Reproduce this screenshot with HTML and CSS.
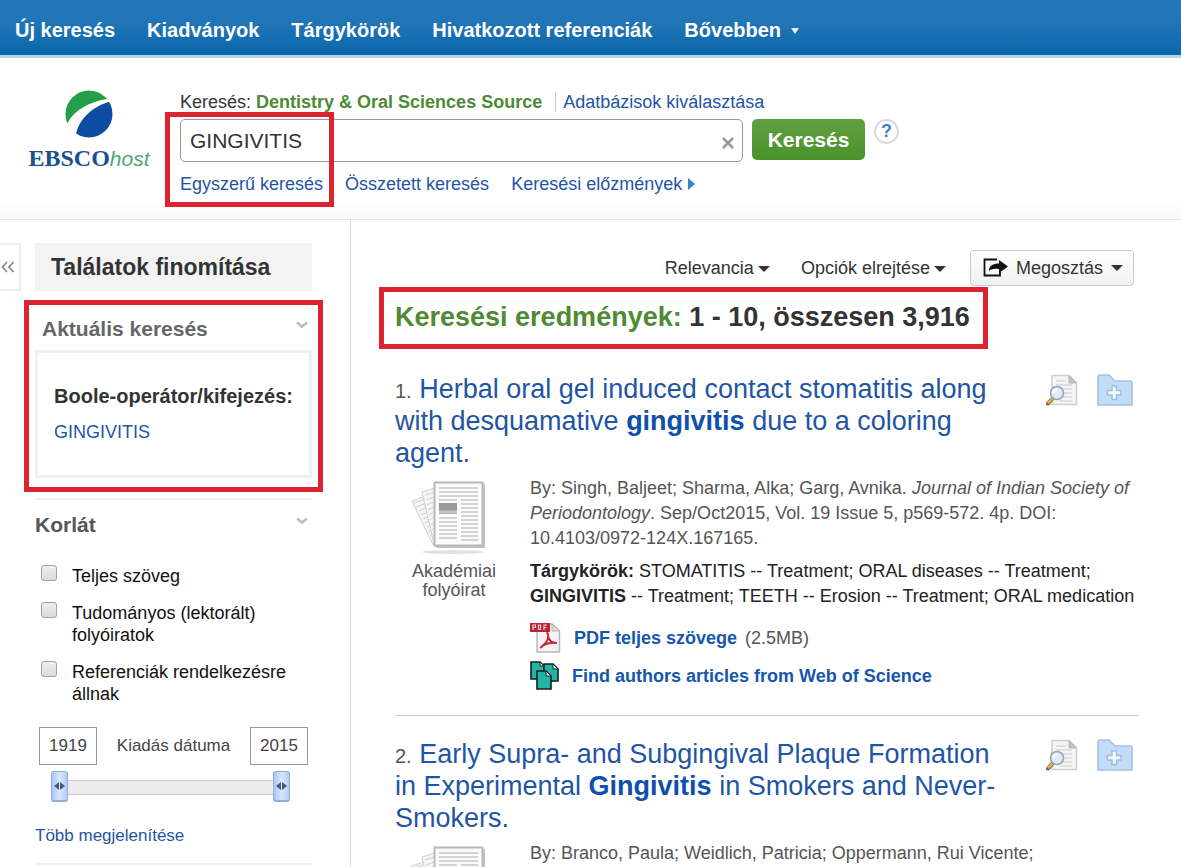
FILE: index.html
```html
<!DOCTYPE html>
<html lang="hu">
<head>
  <meta charset="UTF-8" />
  <meta name="viewport" content="width=device-width, initial-scale=1" />
  <title>EBSCOhost: GINGIVITIS</title>
  <link rel="stylesheet" href="styles.css">
</head>
<body>
  <!-- shared icons -->
  <svg class="sprite" aria-hidden="true">
    <symbol id="chevron" viewBox="0 0 12 8">
      <path d="M1 1.500 6 5.500 11 1.500" fill="none" stroke="#bdbdbd" stroke-width="2.600" />
    </symbol>
    <symbol id="preview" viewBox="0 0 32 32">
      <path d="M6 1.500H23L30.500 9V30.500H6Z" fill="#f5f5f5" stroke="#cfcfcf" stroke-width="1.500" />
      <path d="M23 1.500V9H30.500Z" fill="#c3c3c3" stroke="#b5b5b5" />
      <path d="M10 7H20M10 11H26M13 15H26M17 19H26M17 23H26M14 27H26" stroke="#d8d8d8" stroke-width="1.300" />
      <path d="M7 24 2 29.500" stroke="#6d5a38" stroke-width="4" stroke-linecap="round" />
      <path d="M7 24 2.500 28.500" stroke="#e0b04a" stroke-width="2.500" stroke-linecap="round" />
      <circle cx="11" cy="19" r="6.500" fill="#dcebfa" stroke="#9aa5b3" stroke-width="1.600" />
      <path d="M7.500 19a4 4 0 0 1 4-3.500" fill="none" stroke="#fff" stroke-width="2" />
    </symbol>
    <symbol id="folder" viewBox="0 0 36 32">
      <path d="M1 3Q1 1 3 1H11Q13 1 14 3L18 7H33Q35 7 35 9V31H1Z" fill="#c3dcf7" stroke="#a3c1e4" stroke-width="1.600" />
      <path d="M15 12h4.500v4.500h4.500v4.500h-4.500v4.500h-4.500v-4.500h-4.500v-4.500h4.500z" fill="#f2f8ff" stroke="#9dbce0" stroke-width="1.400" />
    </symbol>
    <symbol id="journal" viewBox="0 0 76 76">
      <ellipse cx="42" cy="72" rx="31" ry="2" fill="#e2e2e2" />
      <g stroke="#cecece" fill="#f6f6f6">
        <path d="M1 21 18 15 38 56 22 65Z" />
        <path d="M3 23 17 18M5 27 18 22M8 31 20 26M10 35 22 30M12 39 23 34M14 43 24 38M16 47 24 43M18 51 25 47M20 55 26 51" />
        <path d="M11 12 24 8 38 61 23 64Z" />
        <path d="M14 15 23 12M15 20 23 17M16 25 23 22M17 30 23 27M18 35 23 32M19 40 23 37M20 45 23 43M21 50 23 48" />
      </g>
      <rect x="25" y="4" width="49" height="64" fill="#c4c4c4" />
      <rect x="23.500" y="2.500" width="48" height="63" fill="#fbfbfb" stroke="#b8b8b8" stroke-width="2" />
      <path d="M28 8H67M28 12H67M28 16H67M28 20H46M28 38H46M28 42H46M28 46H46M28 50H46M28 54H46M28 58H46M50 20H67M50 24H67M50 28H67M50 32H67M50 36H67M50 40H67M50 44H67M50 48H67M50 52H67M50 56H67M50 60H67" stroke="#d3d3d3" stroke-width="1.800" />
      <rect x="28" y="23" width="18" height="11" fill="#969d9d" />
      <path d="M28 32H46" stroke="#c3c8c8" stroke-width="3" />
    </symbol>
  </svg>

  <nav class="topbar">
    <a href="#">Új keresés</a>
    <a href="#">Kiadványok</a>
    <a href="#">Tárgykörök</a>
    <a href="#">Hivatkozott referenciák</a>
    <a href="#">Bővebben <span class="arrow arrow-white"></span></a>
  </nav>

  <header class="header">
    <a class="logo" href="#" aria-label="EBSCOhost">
      <svg width="48" height="48" viewBox="0 0 48 48">
        <clipPath id="globe"><circle cx="24" cy="24" r="23.500" /></clipPath>
        <g clip-path="url(#globe)">
          <path d="M0 36V0H48L42 9C24 12 9 20 2 34Z" fill="#23a047" />
          <path d="M48 11C28 15 14 29 11 44L14 48H48Z" fill="#0c4da2" />
        </g>
      </svg>
      <span class="logo-text"><b>EBSCO</b><i>host</i></span>
    </a>

    <form class="search">
      <div class="search-db">
        <label for="query">Keresés:</label>
        <b>Dentistry &amp; Oral Sciences Source</b>
        <a href="#">Adatbázisok kiválasztása</a>
      </div>
      <div class="search-row">
        <div class="search-field">
          <input id="query" type="text" value="GINGIVITIS">
          <button type="button" class="clear" aria-label="Törlés">
            <svg width="12" height="12" viewBox="0 0 12 12"><path d="M1 1 11 11M11 1 1 11" stroke="#999" stroke-width="2.600" /></svg>
          </button>
        </div>
        <button type="submit" class="search-btn">Keresés</button>
        <a class="help" href="#">?</a>
      </div>
      <div class="search-modes">
        <a href="#">Egyszerű keresés</a>
        <a href="#">Összetett keresés</a>
        <a href="#">Keresési előzmények<span class="arrow-right"></span></a>
      </div>
      <div class="mark mark-search"></div>
    </form>
  </header>

  <div class="page">
    <aside class="sidebar">
      <button class="collapse" aria-label="Összecsukás">
        <svg width="14" height="12" viewBox="0 0 14 12"><path d="M6 1 1.500 6 6 11M12.500 1 8 6 12.500 11" fill="none" stroke="#8a8a8a" stroke-width="1.800" /></svg>
      </button>
      <div class="sidebar-body">
        <h2 class="refine">Találatok finomítása</h2>

        <section class="current">
          <div class="section-head">
            <h3>Aktuális keresés</h3>
            <svg width="12" height="8"><use href="#chevron" /></svg>
          </div>
          <div class="current-box">
            <b>Boole-operátor/kifejezés:</b>
            <a href="#">GINGIVITIS</a>
          </div>
          <div class="mark mark-current"></div>
        </section>

        <section class="limit">
          <div class="section-head">
            <h3>Korlát</h3>
            <svg width="12" height="8"><use href="#chevron" /></svg>
          </div>
          <div class="checks">
            <label><input type="checkbox"><span>Teljes szöveg</span></label>
            <label><input type="checkbox"><span>Tudományos (lektorált) folyóiratok</span></label>
            <label><input type="checkbox"><span>Referenciák rendelkezésre állnak</span></label>
          </div>
          <div class="dates">
            <input type="text" value="1919" aria-label="Kezdő év">
            <span>Kiadás dátuma</span>
            <input type="text" value="2015" aria-label="Záró év">
          </div>
          <div class="slider">
            <input type="range" min="1919" max="2015" value="1919" aria-label="Kezdő év">
            <input type="range" min="1919" max="2015" value="2015" aria-label="Záró év">
          </div>
          <a class="more" href="#">Több megjelenítése</a>
        </section>
      </div>
    </aside>

    <main class="results">
      <div class="toolbar">
        <button>Relevancia<span class="arrow"></span></button>
        <button>Opciók elrejtése<span class="arrow"></span></button>
        <button class="share">
          <svg width="25" height="20" viewBox="0 0 25 20">
            <path d="M14 1.500H1.500V17.500H17V14" fill="none" stroke="#111" stroke-width="1.800" />
            <path d="M6 13C6 7.500 10 5.500 16 5.500V2L25 8.500 16 15V11C11 10.500 8 11 6 13Z" fill="#111" />
          </svg>
          Megosztás<span class="arrow"></span>
        </button>
      </div>

      <h1 class="count"><span>Keresési eredmények:</span> 1 - 10, összesen 3,916</h1>

      <article class="result">
        <div class="result-head">
          <h2><small>1.</small> <a href="#">Herbal oral gel induced contact stomatitis along with desquamative <b>gingivitis</b> due to a coloring agent.</a></h2>
          <div class="tools">
            <a href="#" aria-label="Előnézet"><svg width="32" height="32"><use href="#preview" /></svg></a>
            <a href="#" aria-label="Mappába"><svg width="36" height="32"><use href="#folder" /></svg></a>
          </div>
        </div>
        <div class="result-body">
          <div class="type">
            <svg width="76" height="76"><use href="#journal" /></svg>
            <span>Akadémiai folyóirat</span>
          </div>
          <div class="info">
            <p class="source">By: Singh, Baljeet; Sharma, Alka; Garg, Avnika. <i>Journal of Indian Society of Periodontology</i>. Sep/Oct2015, Vol. 19 Issue 5, p569-572. 4p. DOI: 10.4103/0972-124X.167165.</p>
            <p class="subjects"><b>Tárgykörök:</b> STOMATITIS -- Treatment; ORAL diseases -- Treatment; <b>GINGIVITIS</b> -- Treatment; TEETH -- Erosion -- Treatment; ORAL medication</p>
            <div class="fulltext">
              <svg width="32" height="32" viewBox="0 0 32 32">
                <path d="M7 2H22L29.500 9V30H7Z" fill="#f6f3f3" stroke="#bdb6b6" stroke-width="1.500" />
                <path d="M22 2V9H29.500Z" fill="#ddd" stroke="#b5afaf" />
                <path d="M0 1H20V10H0Z" fill="#bd2436" />
                <path d="M3 8V3H5.500V5.500H3M8.500 3V7.500H10.500V3ZM14 8V3H17M14 5.500H16.500" fill="none" stroke="#f3c9cd" stroke-width="1.200" />
                <path d="M17 10C20 15 17 21 10 26M18 14C19 19 23 21 27 21M12 24C17 21 21 20 27 21" fill="none" stroke="#c32b38" stroke-width="1.900" />
              </svg>
              <a href="#">PDF teljes szövege</a>
              <span>(2.5MB)</span>
            </div>
            <div class="fulltext">
              <svg width="30" height="30" viewBox="0 0 30 30">
                <g fill="#20b5a4" stroke="#12201f" stroke-width="1.600">
                  <path d="M1 1H10L14 5V18H1Z" />
                  <path d="M14 3H23L28 8V20H14Z" />
                  <path d="M7 10H16L21 15V28H7Z" />
                </g>
                <path d="M10 1V5H14ZM23 3V8H28ZM16 10V15H21Z" fill="#f2f8f0" stroke="#12201f" />
              </svg>
              <a href="#">Find authors articles from Web of Science</a>
            </div>
          </div>
        </div>
      </article>

      <article class="result">
        <div class="result-head">
          <h2><small>2.</small> <a href="#">Early Supra- and Subgingival Plaque Formation in Experimental <b>Gingivitis</b> in Smokers and Never-Smokers.</a></h2>
          <div class="tools">
            <a href="#" aria-label="Előnézet"><svg width="32" height="32"><use href="#preview" /></svg></a>
            <a href="#" aria-label="Mappába"><svg width="36" height="32"><use href="#folder" /></svg></a>
          </div>
        </div>
        <div class="result-body">
          <div class="type">
            <svg width="76" height="76"><use href="#journal" /></svg>
          </div>
          <div class="info">
            <p class="source">By: Branco, Paula; Weidlich, Patricia; Oppermann, Rui Vicente;</p>
          </div>
        </div>
      </article>
      <div class="mark mark-count"></div>
    </main>
  </div>
</body>
</html>
```
FILE: styles.css
```css
:root {
  --link: #1f55a5;
  --green: #4f8a34;
  --text: #333;
  --red: #dc2430;
}

* {
  box-sizing: border-box;
}

body {
  margin: 0;
  display: flex;
  flex-direction: column;
  height: 100vh;
  overflow: hidden;
  background: #fff;
  color: var(--text);
  font-family: "Liberation Sans", Arial, sans-serif;
  font-size: 18px;
}

h1, h2, h3, p {
  margin: 0;
}

a {
  color: var(--link);
  text-decoration: none;
}

svg {
  display: block;
  flex: none;
}

button {
  padding: 0;
  border: none;
  background: none;
  color: inherit;
  font: inherit;
  cursor: pointer;
}

input {
  font: inherit;
  color: inherit;
}

.sprite {
  position: absolute;
  width: 0;
  height: 0;
}

.arrow {
  display: inline-block;
  border: 6px solid transparent;
  border-top-color: #333;
  border-bottom: none;
}

/* red highlight frames */
.mark {
  position: absolute;
  border: 5px solid var(--red);
  pointer-events: none;
}

.topbar {
  display: flex;
  flex: none;
  align-items: center;
  gap: 32px;
  height: 58px;
  padding: 5px 15px 0;
  background: linear-gradient(#2378b9, #2175b6 40%, #0a67aa);
  border-bottom: 3px solid #bed2e2;
}

.topbar a {
  color: #fff;
  font-size: 20px;
  font-weight: bold;
}

.arrow-white {
  margin: 0 0 3px 4px;
  border-width: 6px 4px 0;
  border-top-color: #e4f0f8;
}

.header {
  display: flex;
  flex: none;
  height: 162px;
  padding: 32px 28px 0;
  background: linear-gradient(#fff 88%, #f9f9f9);
  border-bottom: 1px solid #e4e4e4;
}

.logo {
  display: flex;
  flex: none;
  flex-direction: column;
  align-items: center;
  width: 122px;
}

.logo-text {
  font-size: 24px;
  line-height: 40px;
  white-space: nowrap;
}

.logo-text b {
  color: #1d4e8f;
  font-family: "Liberation Serif", serif;
}

.logo-text i {
  color: #4fa573;
  font-size: 21px;
}

.search {
  position: relative;
  width: 719px;
  margin-left: 30px;
}

.search-db {
  display: flex;
  gap: 5px;
  line-height: 24px;
}

.search-db b {
  color: var(--green);
}

.search-db a {
  height: 20px;
  margin: 2px 0 0 8px;
  padding-left: 7px;
  border-left: 1px solid #ccc;
  line-height: 20px;
}

.search-row {
  display: flex;
  gap: 9px;
  margin-top: 5px;
}

.search-field {
  position: relative;
  flex: 1;
}

.search-field input {
  width: 100%;
  height: 43px;
  padding: 0 36px 0 9px;
  border: 1px solid #999;
  border-radius: 5px;
  background: #fff;
  font-size: 21px;
}

.clear {
  position: absolute;
  top: 18px;
  right: 9px;
}

.search-btn {
  width: 113px;
  height: 41px;
  border-radius: 5px;
  background: linear-gradient(#609f40, #4b922c);
  color: #fff;
  font-size: 21px;
  font-weight: bold;
}

.help {
  width: 25px;
  height: 25px;
  border: 2px solid #d8d8de;
  border-radius: 50%;
  color: #3f82c8;
  font-weight: bold;
  line-height: 20px;
  text-align: center;
}

.search-modes {
  display: flex;
  gap: 22px;
  margin-top: 10px;
  line-height: 24px;
}

.arrow-right {
  display: inline-block;
  margin-left: 6px;
  border: 6px solid transparent;
  border-left: 7px solid #3483c8;
  border-right: none;
}

.mark-search {
  top: 22px;
  left: -15px;
  width: 169px;
  height: 95px;
}

.page {
  display: flex;
  flex: 1;
  min-height: 0;
}

.sidebar {
  display: flex;
  flex: none;
  align-items: flex-start;
  gap: 14px;
  width: 351px;
  padding: 23px 38px 0 0;
  border-right: 1px solid #dedede;
}

.collapse {
  display: flex;
  align-items: center;
  justify-content: center;
  width: 21px;
  height: 48px;
  padding-right: 4px;
  border: 2px solid #eee;
  border-left: none;
}

.sidebar-body {
  flex: 1;
}

.refine {
  padding: 1px 16px 0;
  background: #f3f3f3;
  font-size: 23px;
  line-height: 47px;
}

.current {
  position: relative;
  margin-top: 23px;
}

.section-head {
  display: flex;
  justify-content: space-between;
  padding-right: 4px;
}

.section-head svg {
  margin-top: 7px;
}

.section-head h3 {
  color: #555;
  font-size: 21px;
  line-height: 30px;
}

.current h3 {
  padding-left: 7px;
  color: #666;
}

.current-box {
  display: flex;
  flex-direction: column;
  gap: 12px;
  height: 128px;
  margin-top: 6px;
  padding: 31px 16px 0;
  border: 3px solid #f0f0f0;
  line-height: 24px;
}

.current-box b {
  font-size: 20px;
  white-space: nowrap;
}

.mark-current {
  top: -14px;
  right: -11px;
  bottom: -14px;
  left: -11px;
}

.limit {
  margin-top: 20px;
  padding-top: 10px;
  border-top: 2px solid #f0f0f0;
  border-bottom: 2px solid #f0f0f0;
}

.checks {
  display: flex;
  flex-direction: column;
  gap: 15px;
  margin-top: 25px;
  color: #111;
  line-height: 22px;
}

.checks label {
  display: flex;
  gap: 15px;
  padding-left: 6px;
}

.checks input {
  appearance: none;
  flex: none;
  width: 16px;
  height: 16px;
  margin: 0;
  border: 1px solid #a0a0a0;
  border-radius: 3px;
  background: linear-gradient(#eee, #dcdcdc);
}

.checks input:checked {
  background: #5a8fd0;
}

.dates {
  display: flex;
  align-items: center;
  justify-content: space-between;
  margin-top: 22px;
  padding: 0 4px;
  color: #444;
  font-size: 17px;
}

.dates input {
  width: 58px;
  height: 38px;
  padding: 0;
  border: 1px solid #999;
  text-align: center;
}

.slider {
  position: relative;
  margin: 5px 22px 0 16px;
  padding: 10px 0 7px;
}

.slider::before {
  content: "";
  display: block;
  height: 13px;
  border: 1px solid #ccc;
  background: #ececec;
}

.slider input {
  appearance: none;
  position: absolute;
  inset: 0;
  width: 100%;
  margin: 0;
  background: none;
  pointer-events: none;
}

.slider input::-webkit-slider-thumb {
  appearance: none;
  width: 17px;
  height: 31px;
  border: 1px solid #92acd8;
  border-bottom-width: 2px;
  border-radius: 3px;
  background:
    url('data:image/svg+xml,<svg xmlns="http://www.w3.org/2000/svg" width="11" height="8"><path d="M5 0v8L0 4zM6 0v8l5-4z" fill="%23425a80"/></svg>') center no-repeat,
    linear-gradient(90deg, #a9c6f6, #d8e6fd 50%, #b4cdf7);
  pointer-events: auto;
}

.more {
  display: block;
  margin: 21px 0 14px;
  font-size: 17px;
  line-height: 26px;
}

.results {
  position: relative;
  flex: 1;
  min-width: 0;
  padding: 30px 42px 0 44px;
}

.toolbar {
  display: flex;
  align-items: center;
  justify-content: flex-end;
  gap: 31px;
  padding-right: 5px;
}

.toolbar .arrow {
  margin: 0 0 2px 4px;
}

.toolbar .share {
  display: flex;
  align-items: center;
  gap: 8px;
  height: 36px;
  margin-left: -7px;
  padding: 0 10px 0 12px;
  border: 1px solid #ccc;
  border-radius: 4px;
  background: linear-gradient(#fff, #f1f1f1);
}

.toolbar .share .arrow {
  margin: 0;
}

.count {
  margin-top: 15px;
  font-size: 27px;
  line-height: 32px;
}

.count span {
  color: var(--green);
}

.mark-count {
  top: 67px;
  left: 28px;
  width: 609px;
  height: 62px;
}

.result {
  padding-bottom: 20px;
  border-bottom: 1px solid #ccc;
}

.count + .result {
  margin-top: 40px;
}

.result + .result {
  padding-top: 22px;
}

.result-head {
  display: flex;
  justify-content: space-between;
}

.result-head h2 {
  max-width: 612px;
  font-size: 27px;
  font-weight: normal;
  line-height: 32px;
}

.result-head small {
  color: #555;
  font-size: 20px;
  line-height: 20px;
}

.result-head b {
  color: #0d50ad;
}

.tools {
  display: flex;
  gap: 19px;
  padding: 1px 6px 0 0;
}

.result-body {
  display: flex;
  gap: 33px;
  margin-top: 7px;
  padding-left: 16px;
}

.type {
  display: flex;
  flex: none;
  flex-direction: column;
  align-items: flex-start;
  width: 86px;
  padding-top: 4px;
  color: #555;
  line-height: 19px;
}

.type span {
  margin-top: 6px;
  text-align: center;
}

.info {
  flex: 1;
  line-height: 25px;
}

.source {
  color: #555;
}

.subjects {
  margin: 8px 0 10px;
  color: #222;
}

.fulltext {
  display: flex;
  align-items: center;
  gap: 8px;
  height: 38px;
}

.fulltext svg {
  margin-right: 4px;
}

.fulltext a {
  color: #1656ad;
  font-weight: bold;
}

.fulltext span {
  color: #555;
}
```
